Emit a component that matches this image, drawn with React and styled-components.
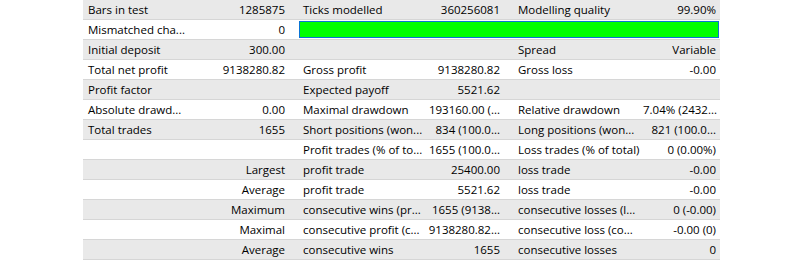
import React from 'react';
import styled, { createGlobalStyle } from 'styled-components';

const GlobalStyle = createGlobalStyle`
  html, body {
    margin: 0;
    padding: 0;
    background: #fff;
  }
`;

const rowGray = '#e9e9e9';
const rowLine = '#d6d6d6';

const rows = [
  ['Bars in test', '1285875', 'Ticks modelled', '360256081', 'Modelling quality', '99.90%'],
  ['Mismatched cha...', '0', 'BAR'],
  ['Initial deposit', '300.00', '', '', 'Spread', 'Variable'],
  ['Total net profit', '9138280.82', 'Gross profit', '9138280.82', 'Gross loss', '-0.00'],
  ['Profit factor', '', 'Expected payoff', '5521.62', '', ''],
  ['Absolute drawd...', '0.00', 'Maximal drawdown', '193160.00 (...', 'Relative drawdown', '7.04% (2432...'],
  ['Total trades', '1655', 'Short positions (won...', '834 (100.0...', 'Long positions (won...', '821 (100.0...'],
  ['', '', 'Profit trades (% of to...', '1655 (100.0...', 'Loss trades (% of total)', '0 (0.00%)'],
  ['', 'Largest', 'profit trade', '25400.00', 'loss trade', '-0.00'],
  ['', 'Average', 'profit trade', '5521.62', 'loss trade', '-0.00'],
  ['', 'Maximum', 'consecutive wins (pr...', '1655 (9138...', 'consecutive losses (l...', '0 (-0.00)'],
  ['', 'Maximal', 'consecutive profit (c...', '9138280.82...', 'consecutive loss (co...', '-0.00 (0)'],
  ['', 'Average', 'consecutive wins', '1655', 'consecutive losses', '0'],
];

const Report = styled.div`
  margin-left: 83px;
  width: 637px;
  font-family: 'Open Sans', 'Noto Sans', sans-serif;
  font-size: 11.5px;
  color: #000;
`;

const Row = styled.div`
  display: grid;
  grid-template-columns: 130px 85px 130px 85px 130px 77px;
  height: 19px;
  border-bottom: 1px solid ${rowLine};
  background: ${(p) => (p.$shaded ? rowGray : '#fff')};
`;

const Label = styled.div`
  padding-left: 5px;
  line-height: 19px;
  white-space: nowrap;
  overflow: hidden;
`;

const Value = styled.div`
  padding-right: ${(p) => (p.$edge ? '4px' : '13px')};
  line-height: 19px;
  text-align: right;
  white-space: nowrap;
  overflow: hidden;
`;

const QualityBar = styled.div`
  grid-column: 3 / 7;
  margin: 1px 1px 1px 1px;
  background: #00ff00;
  border: 1px solid #0a74d4;
`;

export default function App() {
  return (
    <>
      <GlobalStyle />
      <Report>
        {rows.map((r, i) => (
          <Row key={i} $shaded={i % 2 === 0}>
            <Label>{r[0]}</Label>
            <Value>{r[1]}</Value>
            {r[2] === 'BAR' ? (
              <QualityBar />
            ) : (
              <>
                <Label>{r[2]}</Label>
                <Value>{r[3]}</Value>
                <Label>{r[4]}</Label>
                <Value $edge>{r[5]}</Value>
              </>
            )}
          </Row>
        ))}
      </Report>
    </>
  );
}
